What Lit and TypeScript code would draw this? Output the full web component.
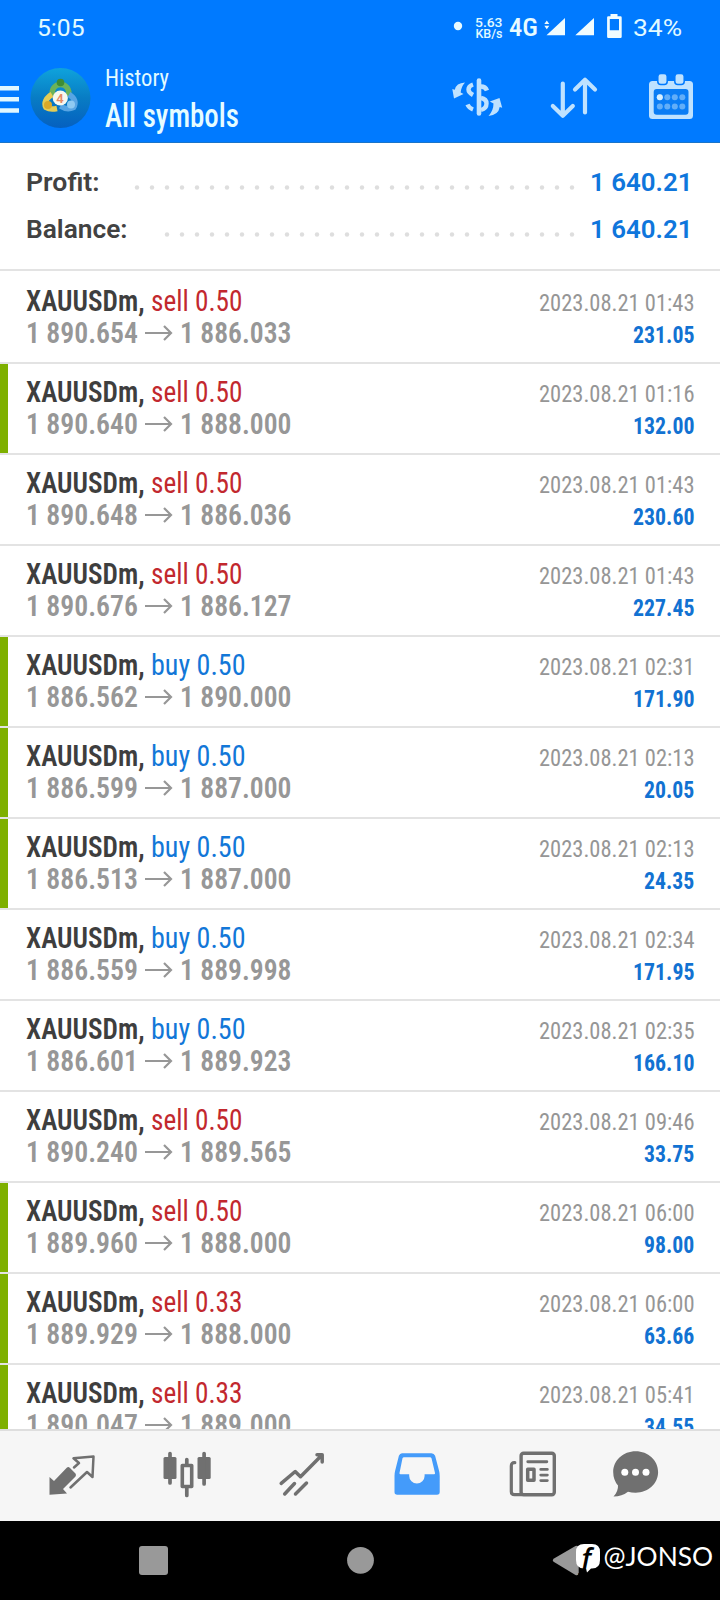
import { LitElement, html, css, svg } from "lit";
import { classMap } from "lit/directives/class-map.js";

type Deal = { side: "sell" | "buy"; lots: string; open: string; close: string; time: string; profit: string; marked?: boolean };

const deals: Deal[] = [
  { side: "sell", lots: "0.50", open: "1 890.654", close: "1 886.033", time: "01:43", profit: "231.05" },
  { side: "sell", lots: "0.50", open: "1 890.640", close: "1 888.000", time: "01:16", profit: "132.00", marked: true },
  { side: "sell", lots: "0.50", open: "1 890.648", close: "1 886.036", time: "01:43", profit: "230.60" },
  { side: "sell", lots: "0.50", open: "1 890.676", close: "1 886.127", time: "01:43", profit: "227.45" },
  { side: "buy", lots: "0.50", open: "1 886.562", close: "1 890.000", time: "02:31", profit: "171.90", marked: true },
  { side: "buy", lots: "0.50", open: "1 886.599", close: "1 887.000", time: "02:13", profit: "20.05", marked: true },
  { side: "buy", lots: "0.50", open: "1 886.513", close: "1 887.000", time: "02:13", profit: "24.35", marked: true },
  { side: "buy", lots: "0.50", open: "1 886.559", close: "1 889.998", time: "02:34", profit: "171.95" },
  { side: "buy", lots: "0.50", open: "1 886.601", close: "1 889.923", time: "02:35", profit: "166.10" },
  { side: "sell", lots: "0.50", open: "1 890.240", close: "1 889.565", time: "09:46", profit: "33.75" },
  { side: "sell", lots: "0.50", open: "1 889.960", close: "1 888.000", time: "06:00", profit: "98.00", marked: true },
  { side: "sell", lots: "0.33", open: "1 889.929", close: "1 888.000", time: "06:00", profit: "63.66", marked: true },
  { side: "sell", lots: "0.33", open: "1 890.047", close: "1 889.000", time: "05:41", profit: "34.55", marked: true },
];

// One line of text set to an exact width; the baseline sits 24px below the top.
const line = (text: string, width: number, cls: string) => html`
  <svg class="line" width=${width} height="32">
    <text class=${cls} x="0" y="24" textLength=${width} lengthAdjust="spacingAndGlyphs">${text}</text>
  </svg>`;

const tabs = [
  svg`<path d="M50 1477L54.5 1481L67.5 1467.5Q69 1466.500 70.500 1468L76 1473.500Q77 1475 76 1476.500L63.500 1489L67.500 1493.500L50 1494.700Z" fill="#707070"/>
      <path d="M74.500 1467.500L79.500 1463L74 1458.300L94 1456.500L93 1477L87.500 1472L71 1487.500" class="s" stroke-width="2.500"/>`,
  svg`<g fill="#707070"><rect x="164" y="1457" width="13" height="22" rx="1.500"/><rect x="198" y="1457" width="13.200" height="22" rx="1.500"/></g>
      <path d="M170.500 1453.500V1483M204.600 1453.500V1484M187.300 1459.500V1465M187.300 1488V1495.500" class="s" stroke-width="3.700"/>
      <rect x="182.800" y="1465.500" width="9.400" height="21" class="s" stroke-width="3.600"/>`,
  svg`<path d="M281.700 1483.300L295.700 1471.500L301 1476.700L322.500 1455M317.500 1454.800H322.700V1462M285.200 1494L295 1483.500M296 1494L307 1483" class="s" stroke-width="3.500"/>`,
  svg`<path fill="#449bfa" fill-rule="evenodd" d="M402.500 1453.300H432Q434.600 1453.300 435.600 1455.800L439.500 1470.500Q440.200 1473 440.200 1476V1492Q440.200 1494.700 437.500 1494.700H397.700Q395 1494.700 395 1492V1476Q395 1473 395.700 1470.500L399.400 1455.800Q400.300 1453.300 402.500 1453.300ZM404.500 1457.200Q403.300 1457.200 403 1458.300L400 1473Q399.800 1474.300 401 1474.300H409.700V1476A7.700 7.500 0 0 0 425.100 1476V1474.300H434.500Q435.800 1474.300 435.500 1473L432 1458.300Q431.600 1457.200 430.500 1457.200Z"/>`,
  svg`<rect x="521.600" y="1453.300" width="33.200" height="41.400" rx="2.500" class="s" stroke-width="3.400"/>
      <path d="M515.300 1462.700Q511.800 1462.300 511.800 1466V1491.500Q511.800 1494.700 515 1494.700H522" class="s" stroke-width="3.200"/>
      <path d="M528.300 1461.700H547.300M541.300 1469.400H547.800M541.300 1475.100H547.800M541.300 1480.600H547.800" class="s" stroke-width="2.900"/>
      <rect x="528.200" y="1469.300" width="6.300" height="11" class="s" stroke-width="3.500"/>`,
  svg`<path fill="#707070" d="M636.200 1451.300C648.600 1451.300 658.600 1460.400 658.600 1472S648.600 1492.700 636.200 1492.700Q632 1492.700 628.500 1491.700Q622.500 1496.500 614 1496.500Q618.800 1491.500 618.500 1485.500Q613.700 1480 613.700 1472C613.700 1460.400 623.700 1451.300 636.200 1451.300Z"/>
      <g fill="#fff"><circle cx="625.300" cy="1472.300" r="3.500"/><circle cx="636" cy="1472.300" r="3.500"/><circle cx="646.500" cy="1472.300" r="3.500"/></g>`,
];

class AppRoot extends LitElement {
  static styles = css`
    :host { display: flex; flex-direction: column; width: 720px; height: 1600px; overflow: hidden; background: #fff; font-family: Roboto, sans-serif; }
    svg { display: block; flex: none; overflow: visible; }
    .s { fill: none; stroke: #707070; stroke-linecap: round; stroke-linejoin: round; }
    .top { background: #007aff; height: 142px; border-bottom: 1px solid #1a74c9; flex: none; }
    .status { display: flex; height: 60px; align-items: flex-start; padding: 12px 0 0 36.500px; box-sizing: border-box; }
    .symbols { margin-left: 370px; }
    .battery { margin-left: 11px; }
    .bar { display: flex; height: 82px; }
    .titles { margin-left: 11px; padding-top: 2px; display: flex; flex-direction: column; gap: 9px; }
    .actions { margin-left: auto; }
    .clock { font-size: 24.500px; fill: #e2faff; }
    .sub { font-size: 24.500px; fill: #e2fbff; font-stretch: 75%; font-weight: 450; }
    .head { font-size: 33px; fill: #e6fcff; font-stretch: 75%; font-weight: 500; }
    .tiny { font-size: 12px; fill: #e2faff; font-weight: 500; }
    .net { font-size: 26.500px; fill: #e8fbff; font-stretch: 75%; font-weight: 500; }
    .summary { height: 128px; padding: 24px 27.500px 0 26px; box-sizing: border-box; border-bottom: 2px solid #e3e3e3; flex: none; }
    .sum { display: flex; height: 47px; justify-content: space-between; }
    .key { font-size: 26.500px; font-weight: 600; fill: #424242; }
    .val { font-size: 26.500px; font-weight: 600; fill: #0f76dc; }
    .dots { flex: none; margin-left: auto; margin-right: 16px; }
    .list { flex: 1; min-height: 0; overflow: hidden; padding-top: 2px; }
    .row { height: 91px; box-sizing: border-box; border-bottom: 2px solid #e3e3e3; display: flex; padding: 14px 26px 0 0; }
    .mark { width: 7.500px; height: 89px; margin-top: -14px; flex: none; }
    .marked .mark { background: #7eb000; }
    .left { margin-left: 18.500px; margin-right: auto; }
    .pair { display: flex; }
    .right { display: flex; flex-direction: column; align-items: flex-end; }
    .sym { font-size: 29px; font-weight: 600; font-stretch: 75%; fill: #3e3e3e; }
    .sell { font-size: 29px; font-stretch: 75%; fill: #c2282e; }
    .buy { font-size: 29px; font-stretch: 75%; fill: #1277d8; }
    .price { font-size: 29px; font-weight: 600; font-stretch: 75%; fill: #979797; }
    .date { font-size: 24.200px; font-stretch: 75%; fill: #969696; }
    .profit { font-size: 24.200px; font-weight: 700; font-stretch: 75%; fill: #1272d2; }
    .side { margin-left: 6.500px; }
    .arrow { margin: 0 7.500px 0 7px; }
    .tabs { display: flex; flex: none; height: 92px; box-sizing: border-box; border-top: 2px solid #dedede; background: #f6f6f6; padding-left: 15px; overflow: hidden; }
    .nav { display: flex; flex: none; height: 79px; background: #000; }
    .nav svg { overflow: hidden; }
    .handle { font-family: Lato, sans-serif; font-size: 27.500px; fill: #fff; }
    .f { font-family: "Open Sans", sans-serif; font-style: italic; font-weight: 600; font-size: 28px; fill: #000; }
  `;

  renderDots(count: number) {
    const w = (count - 1) * 15 + 4;
    return html`<svg class="dots" width=${w} height="32">
      ${Array.from({ length: count }, (_, i) => svg`<circle cx=${2 + i * 15} cy="20.500" r="2.200" fill="#dedede"/>`)}
    </svg>`;
  }

  renderDeal(d: Deal) {
    return html`<div class=${classMap({ row: true, marked: !!d.marked })}>
      <div class="mark"></div>
      <div class="left">
        <div class="pair">
          ${line("XAUUSDm,", 118.5, "sym")}
          <div class="side">${line(`${d.side} ${d.lots}`, d.side === "sell" ? 91.5 : 94.5, d.side)}</div>
        </div>
        <div class="pair">
          ${line(d.open, 112, "price")}
          <svg class="arrow" width="27" height="32" viewBox="0 0 27 32">
            <path d="M0 14H26M19 7L26 14L19 21" fill="none" stroke="#979797" stroke-width="2.200"/>
          </svg>
          ${line(d.close, 111.5, "price")}
        </div>
      </div>
      <div class="right">
        ${line(`2023.08.21 ${d.time}`, 155.5, "date")}
        ${line(d.profit, d.profit.length === 6 ? 61.5 : 50.3, "profit")}
      </div>
    </div>`;
  }

  render() {
    return html`
      <div class="top">
        <div class="status">
          ${line("5:05", 47.5, "clock")}
          <svg class="symbols" width="168" height="32" viewBox="454 12 168 32">
            <circle cx="458" cy="26" r="4.200" fill="#e8fbff"/>
            <text class="tiny" x="475" y="26.500" textLength="27.500" lengthAdjust="spacingAndGlyphs">5.63</text>
            <text class="tiny" x="475.500" y="37.700" textLength="27" lengthAdjust="spacingAndGlyphs">KB/s</text>
            <text class="net" x="509" y="36" textLength="29" lengthAdjust="spacingAndGlyphs">4G</text>
            <g fill="#f0fcff">
              <path d="M565 18V35.300H546.500ZM594 18V35.300H575.300Z"/>
              <path d="M544.300 24L546.800 20.500L549.300 24ZM544.300 25.700L546.800 29.200L549.300 25.700Z"/>
              <path fill-rule="evenodd" d="M610.500 14H617.500V16.300H620.500Q621.700 16.300 621.700 17.500V36.700Q621.700 37.900 620.500 37.900H608.300Q607.100 37.900 607.100 36.700V17.500Q607.100 16.300 608.300 16.300H610.500ZM609.800 19V30.300H619V19Z"/>
            </g>
          </svg>
          <div class="battery">${line("34%", 49, "clock")}</div>
        </div>
        <div class="bar">
          <svg width="94" height="82" viewBox="0 60 94 82">
            <defs>
              <linearGradient id="sky" x1="0" y1="0" x2="0" y2="1"><stop offset="0" stop-color="#0fa3dc"/><stop offset=".5" stop-color="#087cc4"/><stop offset="1" stop-color="#0560c0"/></linearGradient>
            </defs>
            <path d="M0 88.200H19M0 99.300H19M0 110.500H19" stroke="#e0f7ff" stroke-width="4.500"/>
            <circle cx="60.500" cy="98" r="30" fill="url(#sky)"/>
            <g fill="none" stroke-width="5.500">
              <path d="M52.500 96C51 89 55 84.500 60.500 84.500S70 89 68.500 96" stroke="#6bb35a"/>
              <path d="M52 94.500C46 98 43.500 103 46 107.500Q50 110 57 108.500" stroke="#e4cc55"/>
              <path d="M69 94.500C75 98 76.500 103 73.500 107.500Q67 110.500 60.500 106" stroke="#58a5e4"/>
            </g>
            <circle cx="60.500" cy="82.500" r="3.800" fill="#3d8d35"/>
            <circle cx="48" cy="105" r="4" fill="#dba928"/>
            <circle cx="71" cy="104.500" r="4" fill="#8fcaf2"/>
            <circle cx="60.300" cy="98" r="7.600" fill="#f6f8ee"/>
            <text x="56.200" y="102.700" font-size="13" font-weight="600" fill="#e58a66">4</text>
          </svg>
          <div class="titles">
            ${line("History", 64, "sub")}
            ${line("All symbols", 134, "head")}
          </div>
          <svg class="actions" width="280" height="82" viewBox="440 60 280 82">
            <g fill="none" stroke="#bfe2ff" stroke-linecap="round" stroke-linejoin="round">
              <path d="M479 80.500V113.500" stroke-width="4.600"/>
              <path d="M481 86.500Q485.500 86.500 487 90.500M481 98Q486.500 99 486.500 103.500Q486.500 108.500 481 110M473 84.500Q468.500 86 468.500 89.500Q468.500 92.500 473 95M467.500 104.500Q469 108 473 109.500" stroke-width="4.400" stroke-linecap="butt"/>
              <path d="M562.800 83.500V115.500M552.800 106L562.800 115.700L572.800 106M585 112.500V80M575 89.500L585 79.800L595 89.500" stroke-width="4.200"/>
            </g>
            <path d="M465 82.500Q456 83 454.800 89.800L452.300 89L454 98.500L463.500 94L460.700 92.500Q461 87 465 82.500ZM488.500 116Q498.500 115 499.700 107L502.200 107.800L499.500 98L489.800 101.500L493.500 103.500Q493.500 110.500 488.500 116Z" fill="#bfe2ff"/>
            <rect x="649" y="81" width="44" height="38" rx="3.500" fill="#bfe2ff"/>
            <rect x="653.700" y="89" width="34.800" height="25.800" rx="3" fill="#0a7df5"/>
            <g fill="#bfe2ff" stroke="#007aff" stroke-width="1.500"><rect x="657.800" y="73.500" width="9.400" height="11" rx="3"/><rect x="674.800" y="73.500" width="9.400" height="11" rx="3"/></g>
            <g fill="#62aef8">${[0, 1, 2, 3].map((i) => svg`<circle cx=${659.8 + i * 7.5} cy="97.200" r="3"/><circle cx=${659.8 + i * 7.5} cy="106.500" r="3"/>`)}</g>
            <circle cx="659.800" cy="97.200" r="3" fill="#d8f0ff"/>
          </svg>
        </div>
      </div>
      <div class="summary">
        <div class="sum">${line("Profit:", 73.5, "key")}${this.renderDots(30)}${line("1 640.21", 102.5, "val")}</div>
        <div class="sum">${line("Balance:", 101.5, "key")}${this.renderDots(28)}${line("1 640.21", 102.5, "val")}</div>
      </div>
      <div class="list">${deals.map((d) => this.renderDeal(d))}</div>
      <div class="tabs">
        ${tabs.map((t, i) => html`<svg width="115" height="90" viewBox="${15.5 + i * 115} 1431 115 90">${t}</svg>`)}
      </div>
      <div class="nav">
        <svg width="720" height="79" viewBox="0 1521 720 79">
          <g fill="#999">
            <rect x="139" y="1546" width="29" height="29" rx="3"/>
            <circle cx="360.500" cy="1560.300" r="13.400"/>
            <path d="M554 1558.500L575.500 1546Q578.500 1545 578.700 1548V1573Q578.500 1576 575.500 1575L554 1562Q551.500 1560.300 554 1558.500Z"/>
          </g>
          <path d="M584 1544H592Q600 1544 600 1552V1560Q600 1568.500 592 1568.500H591L587 1572.500L586 1568.500H584Q576 1568.500 576 1560V1552Q576 1544 584 1544Z" fill="#fff"/>
          <text class="f" x="581.500" y="1569">f</text>
          <text class="handle" x="603.500" y="1566.300" textLength="109.500" lengthAdjust="spacingAndGlyphs">@JONSO</text>
        </svg>
      </div>`;
  }
}
customElements.define("app-root", AppRoot);
